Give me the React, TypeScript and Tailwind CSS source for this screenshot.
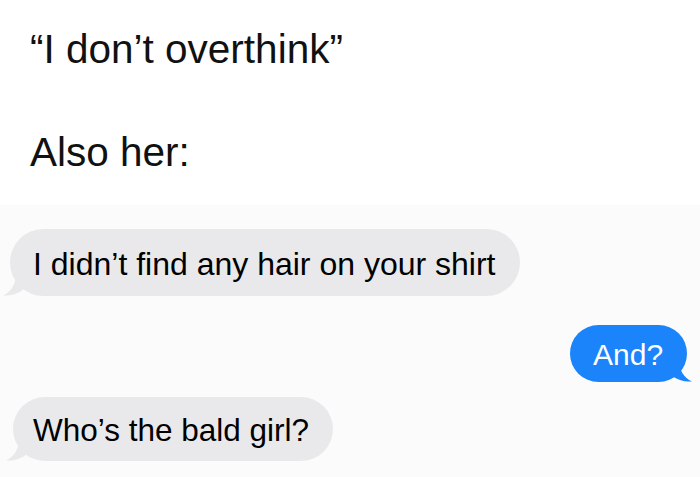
import React from "react";

function LeftTail({ color }: { color: string }) {
  return (
    <svg className="absolute left-[-8px] bottom-0" width="24" height="22" viewBox="0 0 24 22">
      <path d="M14 0 C14 10 9 18 1 21.5 C8 22 16 20 22 15 L24 0 Z" fill={color} />
    </svg>
  );
}

function RightTail({ color }: { color: string }) {
  return (
    <svg className="absolute right-[-6px] bottom-0" width="24" height="22" viewBox="0 0 24 22">
      <path d="M10 0 C10 10 15 18 23 21.5 C16 22 8 20 2 15 L0 0 Z" fill={color} />
    </svg>
  );
}

export default function App() {
  return (
    <div
      className="w-[700px] h-[477px] bg-white overflow-hidden flex flex-col text-[#111]"
      style={{ fontFamily: '"Liberation Sans", Arial, sans-serif' }}
    >
      <div className="h-[205px] bg-white pl-[30px] pt-[26px]">
        <div className="text-[40.5px] leading-[46px]">“I don’t overthink”</div>
        <div className="text-[40.5px] leading-[46px] mt-[57px]">Also her:</div>
      </div>
      <div className="flex-1 bg-[#fbfbfb] flex flex-col pt-[24px]">
        <div className="ml-[10px] relative w-[510px] h-[67px] rounded-[34px] bg-[#e9e9eb] flex items-center pl-[23px] pt-[3px]">
          <LeftTail color="#e9e9eb" />
          <span className="relative text-[32px] leading-none text-black">I didn’t find any hair on your shirt</span>
        </div>
        <div className="self-end mr-[13px] mt-[29px] relative w-[117px] h-[57px] rounded-[29px] bg-[#1b84fb] flex items-center pl-[23px] pt-[2px]">
          <RightTail color="#1b84fb" />
          <span className="relative text-[30px] leading-none text-white">And?</span>
        </div>
        <div className="ml-[13px] mt-[15px] relative w-[320px] h-[64px] rounded-[32px] bg-[#e9e9eb] flex items-center pl-[20px] pt-[3px]">
          <LeftTail color="#e9e9eb" />
          <span className="relative text-[31.5px] leading-none text-black">Who’s the bald girl?</span>
        </div>
      </div>
    </div>
  );
}
